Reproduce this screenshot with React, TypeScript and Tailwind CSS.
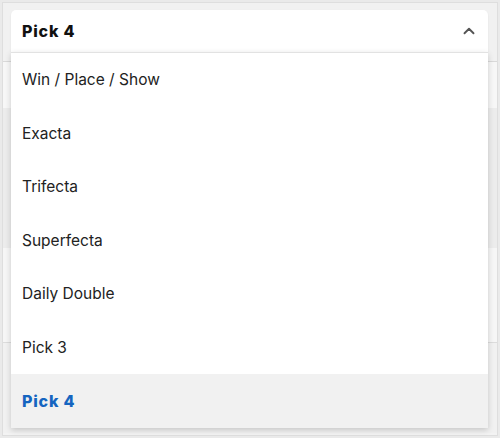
import { ChevronUp } from "lucide-react";

const options = [
  "Win / Place / Show",
  "Exacta",
  "Trifecta",
  "Superfecta",
  "Daily Double",
  "Pick 3",
  "Pick 4",
];

const App = () => {
  const selected = "Pick 4";
  return (
    <div className="w-[500px] h-[438px] bg-[#eaeaea] p-[2px] font-['Inter',sans-serif] overflow-hidden">
      <div className="relative h-full border border-[#dedede] bg-[#f3f3f3]">
        {/* page content behind the open menu */}
        <div className="h-[59px] border-b border-[#d9d9d9] bg-[#f1f1f1]" />
        <div className="h-[46px] bg-[#f7f7f7]" />
        <div className="h-[140px] bg-[#ececec]" />
        <div className="h-[95px] bg-[#f6f6f6] border-b border-[#dcdcdc]" />
        <div className="h-[90px] bg-[#f1f1f1]" />

        <div className="absolute left-[8px] top-[7px] w-[477px]">
          <button className="flex h-[42px] w-full items-center justify-between rounded-t-[5px] bg-white pl-[11px] pr-[10px] shadow-[0_1px_2px_rgba(0,0,0,0.08)]">
            <span className="text-[16px] font-extrabold tracking-[0.05em] text-[#111]">Pick 4</span>
            <ChevronUp size={18} strokeWidth={2.5} className="text-[#555]" />
          </button>
          <ul className="bg-white shadow-[0_2px_6px_rgba(0,0,0,0.18)] border-t border-[#e2e2e2]">
            {options.map((o) => (
              <li
                key={o}
                className={
                  o === selected
                    ? "flex h-[53.5px] items-center bg-[#f1f1f1] pl-[11px] text-[16px] font-extrabold tracking-[0.05em] text-[#1565c0]"
                    : "flex h-[53.5px] items-center pl-[11px] text-[15.5px] text-[#222]"
                }
              >
                {o}
              </li>
            ))}
          </ul>
        </div>
      </div>
    </div>
  );
};

export default App;
